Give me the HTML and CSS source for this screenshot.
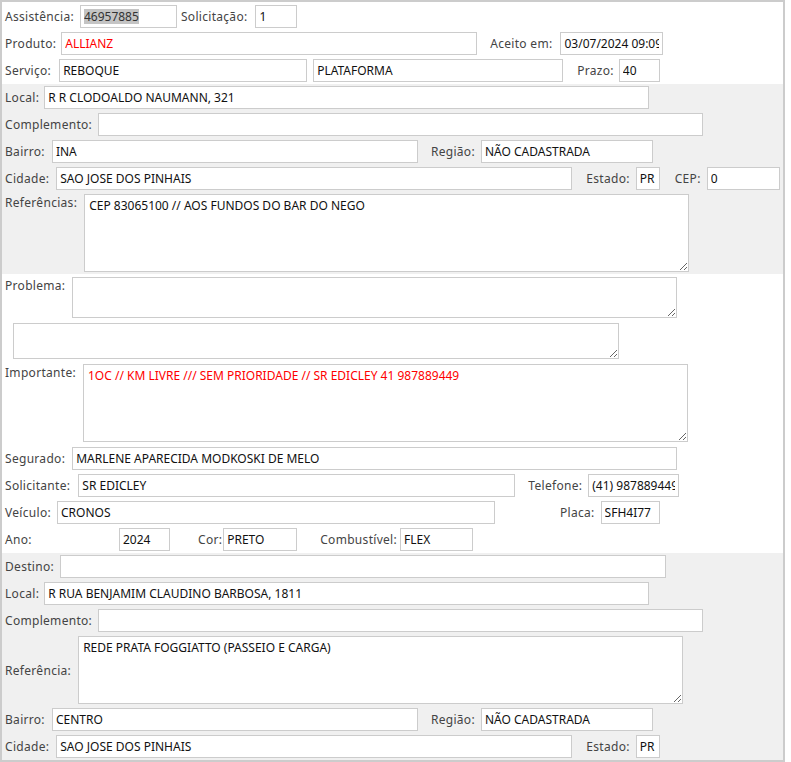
FILE: index.html
```html
<!DOCTYPE html>
<html lang="pt-BR">
<head>
  <meta charset="UTF-8" />
  <title>Assistência 46957885</title>
  <link rel="stylesheet" href="styles.css">
</head>
<body>

  <div class="ficha">

    <!-- dados do atendimento -->
    <div class="secao topo">
      <div class="linha">
        <label class="gap6">Assistência:</label><input class="w97 selecionado" value="46957885">
        <label class="ml4 gap8">Solicitação:</label><input class="w42" value="1">
      </div>
      <div class="linha">
        <label>Produto:</label><input class="w416 vermelho" value="ALLIANZ">
        <label class="ml13 gap8">Aceito em:</label><input class="w103" value="03/07/2024 09:09">
      </div>
      <div class="linha">
        <label class="gap8">Serviço:</label><input class="w248" value="REBOQUE"><input class="w250 ml6" value="PLATAFORMA">
        <label class="ml14">Prazo:</label><input class="w41" value="40">
      </div>
    </div>

    <!-- origem -->
    <div class="secao cinza">
      <div class="linha">
        <label>Local:</label><input class="w605" value="R R CLODOALDO NAUMANN, 321">
      </div>
      <div class="linha">
        <label class="gap6">Complemento:</label><input class="w605" value="">
      </div>
      <div class="linha">
        <label class="gap7">Bairro:</label><input class="w366" value="INA">
        <label class="ml13 gap6">Região:</label><input class="w172" value="NÃO CADASTRADA">
      </div>
      <div class="linha">
        <label class="gap7">Cidade:</label><input class="w516" value="SAO JOSE DOS PINHAIS">
        <label class="ml14 gap6">Estado:</label><input class="w24" value="PR">
        <label class="ml15 gap6">CEP:</label><input class="w73" value="0">
      </div>
      <div class="linha alto">
        <label class="gap7">Referências:</label><textarea class="w605 h78">CEP 83065100 // AOS FUNDOS DO BAR DO NEGO</textarea>
      </div>
    </div>

    <!-- problema / dados do segurado -->
    <div class="secao">
      <div class="linha alto texto">
        <label class="gap7">Problema:</label><textarea class="w605 h41"></textarea>
      </div>
      <div class="linha alto texto">
        <textarea class="w606 h36 recuo"></textarea>
      </div>
      <div class="linha alto texto fim">
        <label class="gap7">Importante:</label><textarea class="w605 h78 vermelho">1OC // KM LIVRE /// SEM PRIORIDADE // SR EDICLEY 41 987889449</textarea>
      </div>
      <div class="linha">
        <label class="gap7">Segurado:</label><input class="w605" value="MARLENE APARECIDA MODKOSKI DE MELO">
      </div>
      <div class="linha">
        <label class="gap8">Solicitante:</label><input class="w437" value="SR EDICLEY">
        <label class="ml13 gap6">Telefone:</label><input class="w91" value="(41) 987889449">
      </div>
      <div class="linha">
        <label class="gap6">Veículo:</label><input class="w438" value="CRONOS">
        <label class="ml65 gap6">Placa:</label><input class="w59" value="SFH4I77">
      </div>
      <div class="linha">
        <label class="rotulo-ano">Ano:</label><input class="w51" value="2024">
        <label class="ml28 gap1">Cor:</label><input class="w74" value="PRETO">
        <label class="ml23 gap3">Combustível:</label><input class="w73" value="FLEX">
      </div>
    </div>

    <!-- destino -->
    <div class="secao cinza">
      <div class="linha">
        <label class="gap6">Destino:</label><input class="w606" value="">
      </div>
      <div class="linha">
        <label>Local:</label><input class="w605" value="R RUA BENJAMIM CLAUDINO BARBOSA, 1811">
      </div>
      <div class="linha">
        <label class="gap6">Complemento:</label><input class="w605" value="">
      </div>
      <div class="linha">
        <label class="gap7">Referência:</label><textarea class="w605 h68">REDE PRATA FOGGIATTO (PASSEIO E CARGA)</textarea>
      </div>
      <div class="linha">
        <label class="gap7">Bairro:</label><input class="w366" value="CENTRO">
        <label class="ml13 gap6">Região:</label><input class="w172" value="NÃO CADASTRADA">
      </div>
      <div class="linha">
        <label class="gap7">Cidade:</label><input class="w516" value="SAO JOSE DOS PINHAIS">
        <label class="ml14 gap6">Estado:</label><input class="w24" value="PR">
      </div>
    </div>

  </div>

</body>
</html>
```

FILE: styles.css
```css
* {
  box-sizing: border-box;
}

body {
  margin: 0;
  font-family: "Noto Sans", Tahoma, sans-serif;
  font-size: 12px;
  color: #444;
  background: #fff;
}

.ficha {
  width: 785px;
  height: 762px;
  border: 2px solid #ccc;
  overflow: hidden;
}

.secao {
  padding: 0 3px;
}

.secao.topo {
  padding-top: 1px;
}

.cinza {
  background: #f0f0f0;
}

.linha {
  display: flex;
  align-items: center;
  padding: 2px 0;
  white-space: nowrap;
}

.linha.alto {
  align-items: flex-start;
}

.linha.texto {
  padding: 3px 0 2px;
}

.linha.texto.fim {
  padding-bottom: 3px;
}

.linha label {
  line-height: 15px;
  letter-spacing: 0.3px;
  margin-right: 5px;
}

.linha.alto label {
  padding-top: 1px;
}

input,
textarea {
  font: inherit;
  color: #111;
  background: #fff;
  border: 1px solid #ccc;
  border-radius: 0;
  margin: 0;
  outline: none;
}

input {
  height: 23px;
  padding: 1px 3px;
}

textarea {
  display: block;
  padding: 3px 4px;
  line-height: 16px;
}

.vermelho {
  color: #f00;
}

/* texto marcado no numero da assistencia */
.selecionado {
  background: linear-gradient(#c4c4c4, #c4c4c4) no-repeat 3px 3px / 55px 15px, #fff;
  color: #333;
}

.recuo {
  margin-left: 8px;
}

.rotulo-ano {
  width: 109px;
}

/* larguras dos campos */
.w24 { width: 24px; }
.w41 { width: 41px; }
.w42 { width: 42px; }
.w51 { width: 51px; }
.w59 { width: 59px; }
.w73 { width: 73px; }
.w74 { width: 74px; }
.w91 { width: 91px; }
.w97 { width: 97px; }
.w103 { width: 103px; }
.w172 { width: 172px; }
.w248 { width: 248px; }
.w250 { width: 250px; }
.w366 { width: 366px; }
.w416 { width: 416px; }
.w437 { width: 437px; }
.w438 { width: 438px; }
.w516 { width: 516px; }
.w605 { width: 605px; }
.w606 { width: 606px; }

.h36 { height: 36px; }
.h41 { height: 41px; }
.h68 { height: 68px; }
.h78 { height: 78px; }

/* espacos entre campo e proximo rotulo */
.ml4 { margin-left: 4px; }
.ml6 { margin-left: 6px; }
.ml13 { margin-left: 13px; }
.ml14 { margin-left: 14px; }
.ml15 { margin-left: 15px; }
.ml23 { margin-left: 23px; }
.ml28 { margin-left: 28px; }
.ml65 { margin-left: 65px; }

.linha label.gap1 { margin-right: 1px; }
.linha label.gap3 { margin-right: 3px; }
.linha label.gap6 { margin-right: 6px; }
.linha label.gap7 { margin-right: 7px; }
.linha label.gap8 { margin-right: 8px; }
```
